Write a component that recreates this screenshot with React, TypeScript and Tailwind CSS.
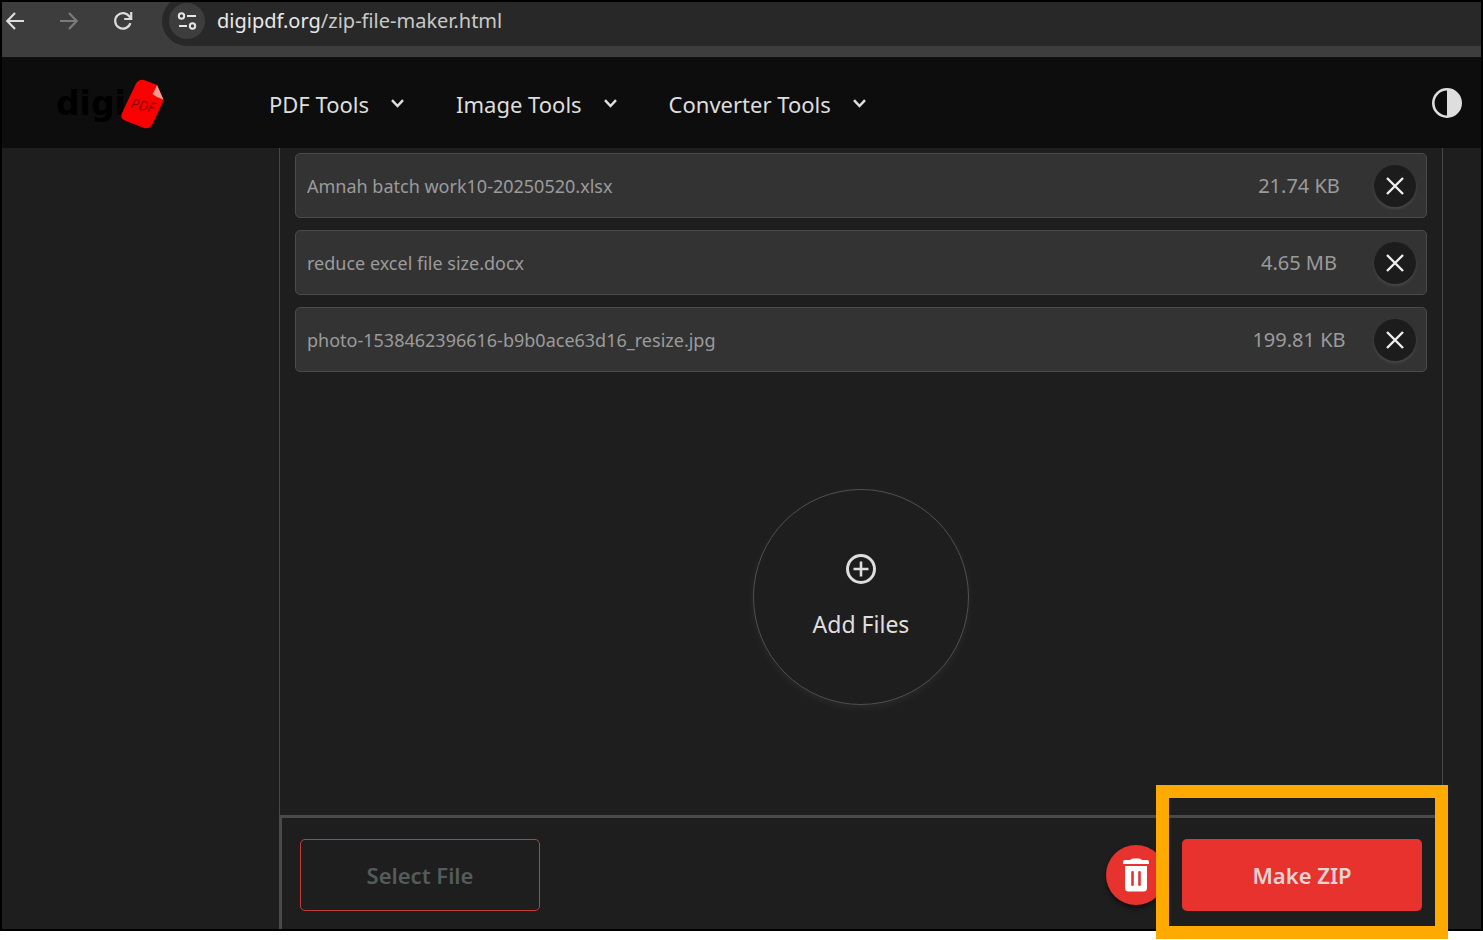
import type { ReactNode } from 'react';

const menus = ['PDF Tools', 'Image Tools', 'Converter Tools'];

const files = [
  { name: 'Amnah batch work10-20250520.xlsx', size: '21.74 KB' },
  { name: 'reduce excel file size.docx', size: '4.65 MB' },
  { name: 'photo-1538462396616-b9b0ace63d16_resize.jpg', size: '199.81 KB' },
];

export default function App() {
  return (
    <div className="flex min-h-screen flex-col bg-white pb-[9px] font-['Noto_Sans','Open_Sans',sans-serif]">
      <div className="flex flex-1 flex-col border-2 border-black bg-[#1e1e1e]">
        <BrowserBar />
        <SiteHeader />
        <main className="mr-[38px] ml-[277px] flex flex-1 flex-col">
          <section className="flex flex-1 flex-col border-x border-[#484848] px-[15px] pt-[5px]">
            <ul className="flex flex-col gap-3">
              {files.map((file) => (
                <FileRow key={file.name} name={file.name} size={file.size} />
              ))}
            </ul>
            <div className="flex flex-1 items-center justify-center pt-1.5">
              <button
                type="button"
                className="flex size-[216px] flex-col items-center justify-center gap-6 rounded-full border border-[#505050] text-[23px] leading-8 text-[#dedede] shadow-[0_3px_8px_rgba(255,255,255,0.05)]"
              >
                <svg className="size-[30px]" viewBox="0 0 30 30" fill="none" stroke="currentColor" aria-hidden="true">
                  <circle cx="15" cy="15" r="13.5" strokeWidth="3" />
                  <path d="M15 7.5v15M7.5 15h15" strokeWidth="2.6" />
                </svg>
                Add Files
              </button>
            </div>
          </section>
          <Actions />
        </main>
      </div>
    </div>
  );
}

function BrowserBar() {
  return (
    <div className="h-[55px] overflow-hidden bg-[#3d3d3d]">
      <div className="flex h-[38px] items-center">
        <div className="flex w-40 shrink-0 items-center gap-9 pl-1">
          <NavButton label="Back">
            <path d="M18 9H1.5M9 1 1.3 9 9 17" />
          </NavButton>
          <NavButton label="Forward" dim>
            <path d="M0 9h16.5M9 1l7.7 8L9 17" />
          </NavButton>
          <NavButton label="Reload">
            <path d="M16.4 11.2A7.8 7.8 0 1 1 15.5 4.6L17 6.500" />
            <path d="M17.2 0v7h-7" />
          </NavButton>
        </div>
        <div className="flex h-[50px] flex-1 items-center rounded-l-full bg-[#282828] pl-[7px]">
          <button type="button" aria-label="Site information" className="flex size-9 items-center justify-center rounded-full bg-[#3d3d3d] text-[#e6e6e6]">
            <svg className="size-5" viewBox="0 0 20 20" fill="none" stroke="currentColor" strokeWidth="2" aria-hidden="true">
              <circle cx="4.5" cy="5" r="2.7" />
              <path d="M10 5h9M2 15h8" />
              <circle cx="15.5" cy="15" r="2.7" />
            </svg>
          </button>
          <p className="ml-3 text-[20px] leading-7 text-[#c8c8c8]">
            <span className="text-[#e8e8e8]">digipdf.org</span>/zip-file-maker.html
          </p>
        </div>
      </div>
    </div>
  );
}

function NavButton({ label, dim, children }: { label: string; dim?: boolean; children: ReactNode }) {
  return (
    <button type="button" aria-label={label} className={dim ? 'text-[#7b7b7b]' : 'text-[#dcdcdc]'}>
      <svg className="size-[18px] overflow-visible" viewBox="0 0 18 18" fill="none" stroke="currentColor" strokeWidth="2.2" aria-hidden="true">
        {children}
      </svg>
    </button>
  );
}

function SiteHeader() {
  return (
    <header className="flex h-[91px] items-center bg-[#0d0d0d] pr-[19px] pl-[54px]">
      <Logo />
      <nav className="ml-[101px] flex items-center gap-[51px] pt-0.5">
        {menus.map((menu) => (
          <button key={menu} type="button" className="flex items-center gap-[21px] text-[22px] leading-8 text-[#dedede]">
            {menu}
            <svg className="h-[9px] w-[15px]" viewBox="0 0 15 9" fill="none" stroke="currentColor" strokeWidth="2.5" aria-hidden="true">
              <path d="M2 1.2 7.5 7 13 1.2" />
            </svg>
          </button>
        ))}
      </nav>
      <button type="button" aria-label="Toggle theme" className="ml-auto text-[#dedede]">
        <svg className="size-[30px]" viewBox="0 0 30 30" aria-hidden="true">
          <circle cx="15" cy="15" r="13.7" fill="none" stroke="currentColor" strokeWidth="2.6" />
          <path d="M15 1a14 14 0 0 1 0 28z" fill="currentColor" />
        </svg>
      </button>
    </header>
  );
}

function Logo() {
  return (
    <a href="#" aria-label="digiPDF" className="block shrink-0 pt-1">
      <svg className="h-[54px] w-28" viewBox="0 0 112 54">
        <text x="0" y="37" fill="#000" fontFamily="DejaVu Sans" fontWeight="700" fontSize="33">digi</text>
        <path
          d="M80 5.5Q83 1 88 2L101 7L107 21Q107.5 22 107 23.5L97 45Q94 51.500 88 50L70 43Q63 40 66 35Z"
          fill="#fb0000"
        />
        <path d="M101 7L107.5 21.5Q100 19 96.5 16Q99 12 101 7Z" fill="#f79a92" />
        <text x="74" y="30" fill="#7d0000" fontFamily="Open Sans" fontSize="14" fontStyle="italic" transform="rotate(12 74 30)">PDF</text>
      </svg>
    </a>
  );
}

function FileRow({ name, size }: { name: string; size: string }) {
  return (
    <li className="flex h-[65px] items-center rounded-[5px] border border-[#4b4b4b] bg-[#333] pr-2.5 pl-[11px] text-[#9b9b9b]">
      <span className="min-w-0 flex-1 truncate text-[18px] leading-7">{name}</span>
      <span className="w-[120px] shrink-0 text-center text-[20px] leading-7">{size}</span>
      <button
        type="button"
        aria-label={`Remove ${name}`}
        className="ml-[15px] flex size-[42px] shrink-0 items-center justify-center rounded-full bg-[#1c1c1c] text-[#efefef] shadow-[0_2px_3px_rgba(255,255,255,0.1)]"
      >
        <svg className="size-[18px]" viewBox="0 0 18 18" stroke="currentColor" strokeWidth="2.4" aria-hidden="true">
          <path d="M1 1l16 16M17 1 1 17" />
        </svg>
      </button>
    </li>
  );
}

function Actions() {
  return (
    <footer className="flex h-[114px] items-start border-x-3 border-t-3 border-[#4a4a4a] px-[18px] pt-[21px]">
      <button type="button" className="h-[72px] w-60 rounded-[5px] border border-[#c23a3a] text-[22px] leading-8 font-semibold text-[#555a5a]">
        Select File
      </button>
      <div className="ml-auto flex items-center gap-4">
        <button
          type="button"
          aria-label="Delete all files"
          className="flex size-[60px] items-center justify-center rounded-full bg-[#e7322d] text-white shadow-[0_3px_5px_rgba(0,0,0,0.5)]"
        >
          <svg className="h-[34px] w-[26px]" viewBox="0 0 26 34" fill="currentColor" aria-hidden="true">
            <path d="M2 2h5q1-1.5 3-1.5h6q2 0 3 1.5h5q2 0 2 2v2H0V4q0-2 2-2Z" />
            <path
              fillRule="evenodd"
              d="M2 8h22v22q0 3.500-3.500 3.500h-15Q2 33.500 2 30ZM9.500 13a1.300 1.300 0 0 0-1.300 1.300v12.400a1.300 1.300 0 0 0 2.600 0V14.300A1.300 1.300 0 0 0 9.500 13Zm7 0a1.300 1.300 0 0 0-1.300 1.300v12.400a1.300 1.300 0 0 0 2.600 0V14.300A1.300 1.300 0 0 0 16.500 13Z"
            />
          </svg>
        </button>
        <div className="relative">
          <button type="button" className="block h-[72px] w-60 rounded-[5px] bg-[#e7322d] text-[22px] leading-8 font-semibold text-[#e6d3d3]">
            Make ZIP
          </button>
          {/* callout frame around the primary action */}
          <div className="pointer-events-none absolute -inset-x-[26px] -top-[54px] -bottom-7 border-[13px] border-[#ffaa00]" />
        </div>
      </div>
    </footer>
  );
}
